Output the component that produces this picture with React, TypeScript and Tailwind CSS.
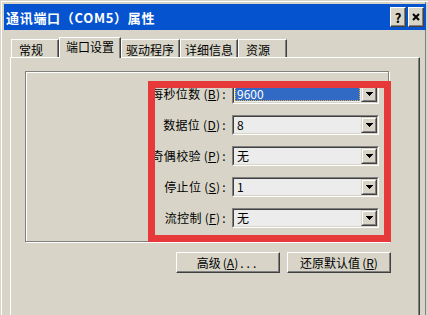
import React from 'react';

const rows = [
	{ label: '每秒位数', key: 'B', value: '9600', selected: true },
	{ label: '数据位', key: 'D', value: '8' },
	{ label: '奇偶校验', key: 'P', value: '无' },
	{ label: '停止位', key: 'S', value: '1' },
	{ label: '流控制', key: 'F', value: '无' },
];

const tabs = [
	{ label: '常规', w: 'w-[48px]', pl: 'pl-[7px]' },
	{ label: '端口设置', active: true },
	{ label: '驱动程序', w: 'w-[59px]', pl: 'pl-[4px]' },
	{ label: '详细信息', w: 'w-[58px]', pl: 'pl-[4px]' },
	{ label: '资源', w: 'w-[49px]', pl: 'pl-[7px]' },
];

function DownArrow() {
	return (
		<svg width="7" height="4" viewBox="0 0 7 4" shapeRendering="crispEdges">
			<rect x="0" y="0" width="7" height="1" fill="#000" />
			<rect x="1" y="1" width="5" height="1" fill="#000" />
			<rect x="2" y="2" width="3" height="1" fill="#000" />
			<rect x="3" y="3" width="1" height="1" fill="#000" />
		</svg>
	);
}

function Combo({ value, selected }: { value: string; selected?: boolean }) {
	return (
		<div className="flex h-[20px] w-[147px] border border-t-[#808080] border-l-[#808080] border-b-white border-r-white">
			<div className="flex flex-1 border border-t-[#404040] border-l-[#404040] border-b-[#d8d5c8] border-r-[#d8d5c8] bg-[#ececec]">
				<div className="flex flex-1 items-center px-[1px]">
					{selected ? (
						<div className="flex h-[14px] w-full items-center border border-dotted border-[#e0b040] bg-[#316ac5] pl-[1px] text-white">
							{value}
						</div>
					) : (
						<span className="pl-[2px]">{value}</span>
					)}
				</div>
				<div className="flex w-[16px] border border-t-[#d8d5c8] border-l-[#d8d5c8] border-b-[#404040] border-r-[#404040] bg-[#d8d5c8]">
					<div className="flex flex-1 items-center justify-center border border-t-white border-l-white border-b-[#808080] border-r-[#808080]">
						<DownArrow />
					</div>
				</div>
			</div>
		</div>
	);
}

function Button({ children }: { children: React.ReactNode }) {
	return (
		<div className="flex h-[21px] w-[104px] items-center justify-center border border-t-white border-l-white border-b-[#404040] border-r-[#404040] shadow-[inset_-1px_-1px_0_#808080]">
			{children}
		</div>
	);
}

export default function App() {
	return (
		<div className="relative h-[315px] w-[428px] overflow-hidden bg-[#d8d5c8] font-['Noto_Sans_CJK_SC',sans-serif] text-[12px] leading-none text-black shadow-[inset_1px_1px_0_#d8d5c8,inset_2px_2px_0_#ffffff,inset_-2px_0_0_#d8d5c8,inset_-3px_0_0_#808080]">
			{/* title bar */}
			<div className="ml-[4px] mt-[4px] flex h-[26px] w-[422px] items-center bg-[#0553cf] pl-[2px] pr-[2px]">
				<span className="text-[13px] font-bold tracking-[0.7px] text-white">通讯端口（COM5）属性</span>
				<div className="ml-auto flex gap-[2px]">
					<div className="flex h-[20px] w-[16px] items-center justify-center border border-t-white border-l-white border-b-[#404040] border-r-[#404040] bg-[#d8d5c8] text-[13px] font-bold shadow-[inset_-1px_-1px_0_#808080]">
						?
					</div>
					<div className="flex h-[20px] w-[16px] items-center justify-center border border-t-white border-l-white border-b-[#404040] border-r-[#404040] bg-[#d8d5c8] shadow-[inset_-1px_-1px_0_#808080]">
						<svg width="8" height="8" viewBox="0 0 8 8">
							<path d="M1 1L7 7M7 1L1 7" stroke="#000" strokeWidth="2" />
						</svg>
					</div>
				</div>
			</div>

			{/* tabs */}
			<div className="ml-[11px] mt-[7px] flex h-[20px] items-end">
				{tabs.map((t) =>
					t.active ? (
						<div
							key={t.label}
							className="relative z-10 mb-[-1px] flex h-[21px] w-[62px] justify-center border-l border-t border-r border-l-white border-t-white border-r-[#404040] bg-[#d8d5c8] pt-[3px] shadow-[inset_-1px_0_0_#808080]"
						>
							{t.label}
						</div>
					) : (
						<div
							key={t.label}
							className={`flex h-[18px] ${t.w} ${t.pl} border-l border-t border-r border-l-white border-t-white border-r-[#404040] pt-[4px] shadow-[inset_-1px_0_0_#808080]`}
						>
							{t.label}
						</div>
					)
				)}
			</div>

			{/* panel */}
			<div className="ml-[10px] h-[258px] w-[410px] border-l border-t border-r border-l-white border-t-white border-r-[#404040] shadow-[inset_-1px_0_0_#808080]">
				<div className="ml-[14px] mt-[13px] flex h-[171px] w-[364px] flex-col gap-[11px] border border-[#808080] pt-[12px] shadow-[inset_1px_1px_0_#ffffff,1px_1px_0_#ffffff]">
					{rows.map((r) => (
						<div key={r.key} className="flex h-[20px] items-center">
							<div className="w-[200px] text-right tracking-[0.3px]">
								{r.label}
								<span className="ml-[3px]">
									(<span className="underline">{r.key}</span>)
								</span>
								<span className="ml-[2px]">:</span>
							</div>
							<div className="ml-[6px]">
								<Combo value={r.value} selected={r.selected} />
							</div>
						</div>
					))}
				</div>

				<div className="ml-[165px] mt-[10px] flex gap-[7px]">
					<Button>
						高级<span className="ml-[2px]">(<span className="underline">A</span>)</span>
						<span className="ml-[2px] tracking-[3px]">...</span>
					</Button>
					<Button>
						还原默认值<span className="ml-[2px]">(<span className="underline">R</span>)</span>
					</Button>
				</div>
			</div>

			{/* red highlight */}
			<div className="pointer-events-none absolute left-[148px] top-[81px] h-[161px] w-[243px] border-[7px] border-[#e7383a]" />
		</div>
	);
}
